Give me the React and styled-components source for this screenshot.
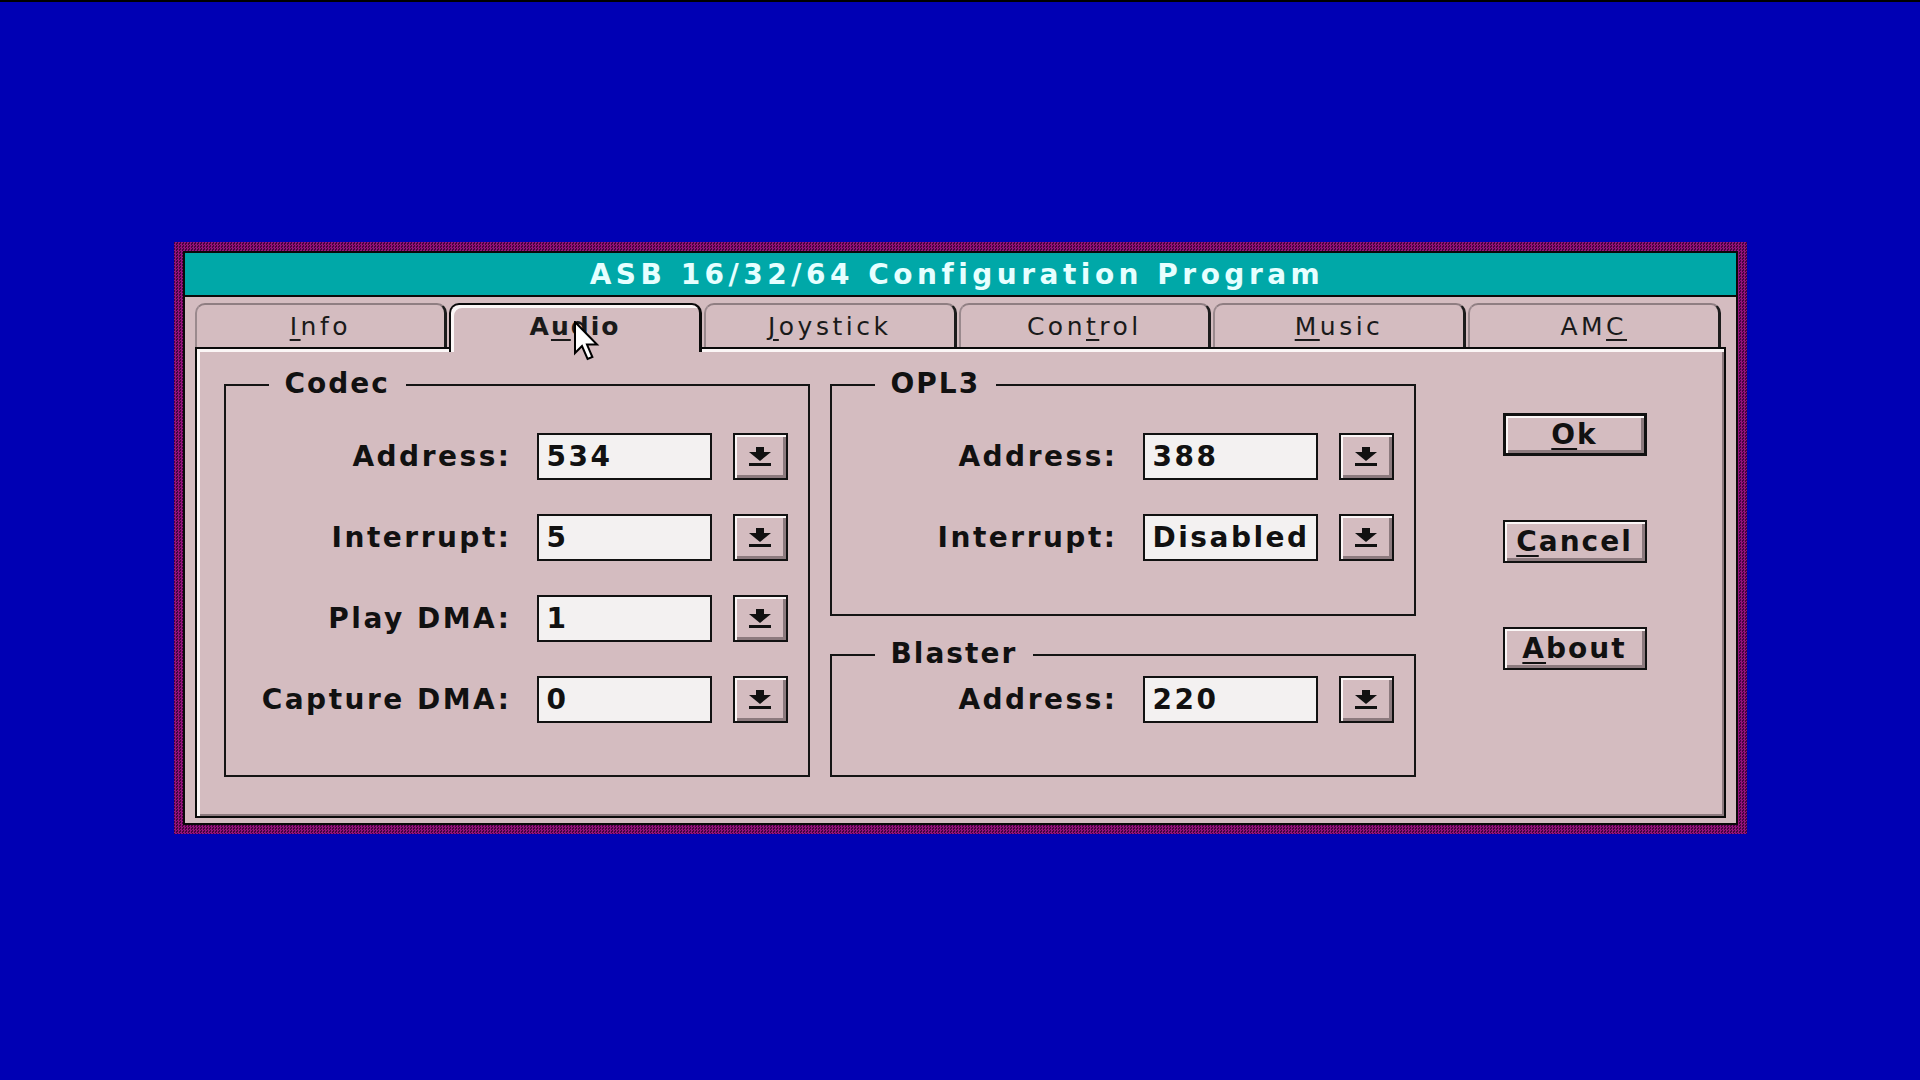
import React from "react";
import styled, { createGlobalStyle } from "styled-components";

const Global = createGlobalStyle`
  html, body { margin: 0; padding: 0; background: #0000b4; }
  body { font-family: "DejaVu Sans", "Liberation Sans", sans-serif; }
  * { box-sizing: border-box; }
`;

const FONT = `"DejaVu Sans", "Liberation Sans", sans-serif`;

const Screen = styled.div`
  width: 1920px;
  height: 1080px;
  border-top: 2px solid #000;
  padding-top: 240px;
  background: #0000b4;
  display: flex;
  justify-content: center;
  align-items: flex-start;
`;

const Window = styled.div`
  width: 1573px;
  padding: 9px;
  background-color: #7a0a66;
  background-image: repeating-conic-gradient(#96127c 0 25%, #44043e 0 50%);
  background-size: 3px 3px;
`;

const Inner = styled.div`
  border: 2px solid #0a0a0a;
  background: #d4bcc0;
  display: flex;
  flex-direction: column;
`;

const TitleBar = styled.div`
  height: 44px;
  background: #00a8a8;
  border-bottom: 2px solid #0a0a0a;
  display: flex;
  align-items: center;
  justify-content: center;
  padding-right: 6px;
  color: #e6ffff;
  font: bold 28px ${FONT};
  letter-spacing: 4.5px;
  white-space: pre;
`;

const Client = styled.div`
  padding: 6px 10px 5px 10px;
`;

const TabStrip = styled.div`
  display: flex;
  gap: 2px;
  height: 44px;
  padding-right: 5px;
  align-items: flex-start;
  position: relative;
  z-index: 2;
`;

const Tab = styled.div`
  position: relative;
  flex: 1;
  height: ${(p) => (p.$active ? 49 : 44)}px;
  margin-bottom: ${(p) => (p.$active ? -5 : 0)}px;
  background: #d4bcc0;
  border-radius: 10px 10px 0 0;
  border-style: solid;
  border-width: 2px 3px 0 2px;
  border-color: ${(p) =>
    p.$active ? "#0a0a0a #0a0a0a #0a0a0a #0a0a0a" : "#8f7e82 #1c1c1c #1c1c1c #9a898d"};
  box-shadow: ${(p) => (p.$active ? "inset 3px 3px 0 #fbf6f6" : "none")};
  display: flex;
  align-items: ${(p) => (p.$active ? "flex-start" : "center")};
  padding-top: ${(p) => (p.$active ? 7 : 0)}px;
  justify-content: center;
  color: #1a1a1a;
  font-family: ${FONT};
  font-size: 25px;
  font-weight: ${(p) => (p.$active ? "bold" : "normal")};
  letter-spacing: ${(p) => (p.$active ? 2 : 3.5)}px;
`;

const U = styled.span`
  text-decoration: underline;
  text-decoration-thickness: 2px;
  text-underline-offset: 4px;
`;

const Cursor = styled.svg`
  position: absolute;
  left: 123px;
  top: 16px;
  width: 26px;
  height: 40px;
`;

const Panel = styled.div`
  height: 471px;
  border: 2px solid #0a0a0a;
  box-shadow: inset 3px 3px 0 #fbf6f6, inset -2px -2px 0 #8c7a7e;
  padding: 35px 0 0 27px;
  display: flex;
  align-items: flex-start;
`;

const Column = styled.div`
  display: flex;
  flex-direction: column;
  gap: 38px;
  margin-left: ${(p) => p.$ml || 0}px;
`;

const Group = styled.div`
  position: relative;
  border: 2px solid #141414;
  padding: ${(p) => p.$pt}px 20px ${(p) => p.$pb}px 0;
  display: flex;
  flex-direction: column;
  gap: 34px;
`;

const GroupTitle = styled.div`
  position: absolute;
  left: 43px;
  top: -18px;
  padding: 0 16px;
  background: #d4bcc0;
  color: #111;
  font: bold 28px/32px ${FONT};
  letter-spacing: 2px;
`;

const Row = styled.div`
  display: flex;
  align-items: center;
  height: 47px;
`;

const Label = styled.div`
  width: 286px;
  margin-right: 25px;
  text-align: right;
  color: #111;
  font: bold 28px ${FONT};
  letter-spacing: 2.5px;
  white-space: pre;
`;

const Field = styled.div`
  width: 175px;
  height: 47px;
  border: 2px solid #111;
  background: #f3f1f1;
  padding-left: 8px;
  display: flex;
  align-items: center;
  color: #111;
  font: bold 28px ${FONT};
  letter-spacing: 2.5px;
`;

const DropButton = styled.button`
  margin-left: 21px;
  width: 55px;
  height: 47px;
  padding: 0;
  border: 2px solid #111;
  background: #d4bcc0;
  box-shadow: inset 2px 2px 0 #fbf6f6, inset -3px -3px 0 #8c7a7e;
  display: flex;
  align-items: center;
  justify-content: center;
`;

const ButtonColumn = styled.div`
  margin-left: 87px;
  padding-top: 29px;
  display: flex;
  flex-direction: column;
  gap: 64px;
`;

const PushButton = styled.button`
  width: 144px;
  height: 43px;
  padding: 0;
  border: ${(p) => (p.$default ? 3 : 2)}px solid #111;
  background: #d4bcc0;
  box-shadow: inset 2px 2px 0 #fbf6f6, inset -3px -3px 0 #8c7a7e;
  color: #111;
  font: bold 28px ${FONT};
  letter-spacing: 2px;
  display: flex;
  align-items: center;
  justify-content: center;
`;

const DropArrow = () => (
  <svg width="24" height="20" viewBox="0 0 24 20">
    <rect x="8" y="0" width="8" height="5" fill="#111" />
    <polygon points="1,5 23,5 12,14" fill="#111" />
    <rect x="1" y="16" width="22" height="3" fill="#111" />
  </svg>
);

const Field3 = ({ label, value }) => (
  <Row>
    <Label>{label}</Label>
    <Field>{value}</Field>
    <DropButton>
      <DropArrow />
    </DropButton>
  </Row>
);

const tabs = [
  { pre: "", u: "I", post: "nfo" },
  { pre: "A", u: "u", post: "dio", active: true },
  { pre: "", u: "J", post: "oystick" },
  { pre: "Con", u: "t", post: "rol" },
  { pre: "", u: "M", post: "usic" },
  { pre: "AM", u: "C", post: "" },
];

export default function App() {
  return (
    <>
      <Global />
      <Screen>
        <Window>
          <Inner>
            <TitleBar>ASB 16/32/64 Configuration Program</TitleBar>
            <Client>
              <TabStrip>
                {tabs.map((t, i) => (
                  <Tab key={i} $active={t.active}>
                    <span>
                      {t.pre}
                      <U>{t.u}</U>
                      {t.post}
                    </span>
                    {t.active && (
                      <Cursor viewBox="0 0 13 20">
                        <path
                          d="M0.5 0.5 L0.5 16 L4 12.5 L6.8 19 L9.2 18 L6.5 11.8 L11.5 11.8 Z"
                          fill="#fff"
                          stroke="#000"
                          strokeWidth="1"
                          strokeLinejoin="miter"
                        />
                      </Cursor>
                    )}
                  </Tab>
                ))}
              </TabStrip>
              <Panel>
                <Column>
                  <Group $pt={47} $pb={52}>
                    <GroupTitle>Codec</GroupTitle>
                    <Field3 label="Address:" value="534" />
                    <Field3 label="Interrupt:" value="5" />
                    <Field3 label="Play DMA:" value="1" />
                    <Field3 label="Capture DMA:" value="0" />
                  </Group>
                </Column>
                <Column $ml={20}>
                  <Group $pt={47} $pb={53}>
                    <GroupTitle>OPL3</GroupTitle>
                    <Field3 label="Address:" value="388" />
                    <Field3 label="Interrupt:" value="Disabled" />
                  </Group>
                  <Group $pt={20} $pb={52}>
                    <GroupTitle>Blaster</GroupTitle>
                    <Field3 label="Address:" value="220" />
                  </Group>
                </Column>
                <ButtonColumn>
                  <PushButton $default>
                    <U>O</U>k
                  </PushButton>
                  <PushButton>
                    <U>C</U>ancel
                  </PushButton>
                  <PushButton>
                    <U>A</U>bout
                  </PushButton>
                </ButtonColumn>
              </Panel>
            </Client>
          </Inner>
        </Window>
      </Screen>
    </>
  );
}
